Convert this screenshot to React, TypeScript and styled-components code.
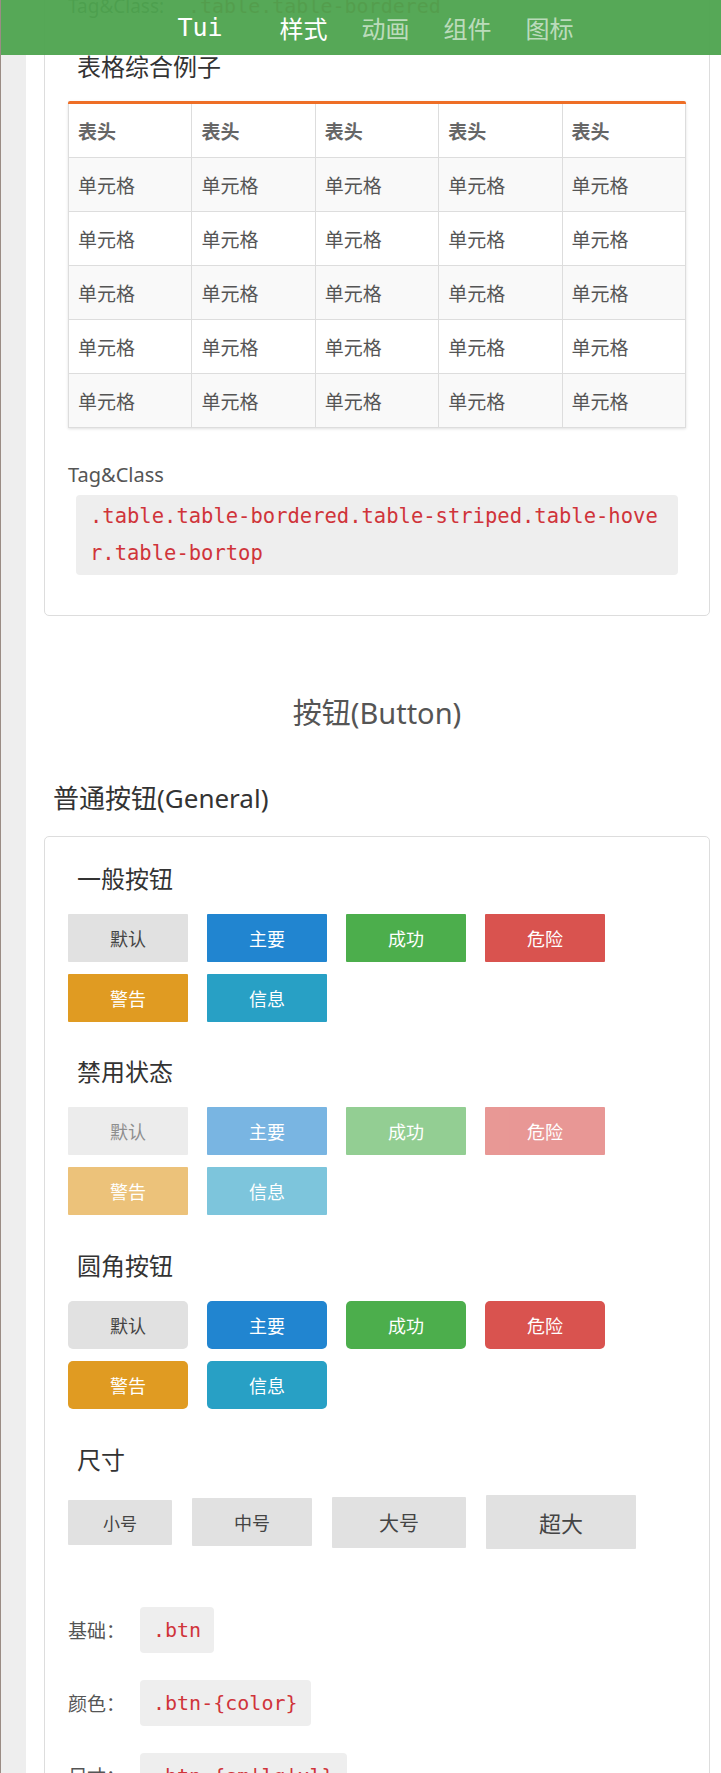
import styled, { createGlobalStyle, css } from 'styled-components';

const GlobalStyle = createGlobalStyle`
  html, body {
    margin: 0;
    padding: 0;
  }
  body {
    font-family: "Noto Sans", "Noto Sans CJK SC", sans-serif;
    color: #333;
    background: #fff;
  }
`;

const Page = styled.div`
  position: relative;
  display: flex;
  min-height: 100vh;
  border-left: 1px solid #9a8c84;
  overflow: hidden;
`;

const Rail = styled.aside`
  flex: 0 0 25px;
  background: #eee;
`;

const Main = styled.main`
  flex: 1;
  min-width: 0;
  padding: 0 11px 0 18px;
`;

const TopBar = styled.header`
  position: absolute;
  top: 0;
  left: 0;
  right: 0;
  height: 55px;
  padding-left: 29px;
  display: flex;
  align-items: center;
  justify-content: center;
  background: rgba(77, 163, 78, 0.95);
  z-index: 10;
`;

const Brand = styled.span`
  font-family: "DejaVu Sans Mono", monospace;
  font-size: 25px;
  color: #fff;
  margin-right: 57px;
`;

const Nav = styled.nav`
  display: flex;
  gap: 34px;
`;

const NavLink = styled.a<{ $active?: boolean }>`
  font-family: "Noto Sans CJK SC", sans-serif;
  font-size: 24px;
  line-height: 30px;
  color: ${(p) => (p.$active ? '#fff' : 'rgba(255, 255, 255, 0.62)')};
  text-decoration: none;
`;

const Card = styled.section<{ $shift?: number }>`
  margin-top: ${(p) => p.$shift ?? 0}px;
  border: 1px solid #ddd;
  border-radius: 5px;
  padding: 2px 23px 40px;
  background: #fff;
`;

const CardTitle = styled.h3<{ $gap?: number }>`
  margin: ${(p) => p.$gap ?? 33}px 0 0 9px;
  font-size: 24px;
  line-height: 34px;
  font-weight: 400;
  color: #333;
`;

const SectionTitle = styled.h2`
  margin: 77px 0 0;
  text-align: center;
  font-size: 29px;
  line-height: 40px;
  font-weight: 400;
  color: #555;
`;

const GroupTitle = styled.h2`
  margin: 48px 0 21px 9px;
  font-size: 26px;
  line-height: 34px;
  font-weight: 400;
  color: #333;
`;

const TableWrap = styled.div`
  margin-top: 17px;
  border-top: 3px solid #ee6e26;
  border-radius: 2px 2px 0 0;
  box-shadow: 0 1px 3px rgba(0, 0, 0, 0.12);
`;

const Table = styled.table`
  width: 100%;
  table-layout: fixed;
  border-collapse: collapse;
  font-family: "Noto Sans CJK SC", sans-serif;
  font-size: 19px;

  th,
  td {
    border: 1px solid #ddd;
    padding: 14px 9px;
    line-height: 25px;
    text-align: left;
  }
  thead th {
    border-top: 0;
    font-weight: 700;
    color: #666;
  }
  td {
    color: #555;
  }
  tbody tr:nth-child(odd) td {
    background: #f9f9f9;
  }
`;

const Caption = styled.div`
  margin-top: 32px;
  font-size: 20px;
  line-height: 30px;
  color: #555;
`;

const CodeBlock = styled.pre`
  margin: 5px 8px 0;
  padding: 3px 14px;
  background: #eee;
  border-radius: 4px;
  font-family: "DejaVu Sans Mono", monospace;
  font-size: 20.5px;
  line-height: 37px;
  color: #d0343a;
  white-space: pre-wrap;
  word-break: break-all;
`;

const ClassRow = styled.div<{ $gap?: number }>`
  display: flex;
  align-items: center;
  margin-top: ${(p) => p.$gap ?? 27}px;
`;

const ClassLabel = styled.span<{ $width: number }>`
  flex: 0 0 ${(p) => p.$width}px;
  font-size: 19px;
  color: #555;
`;

const Code = styled.code`
  display: inline-flex;
  align-items: center;
  height: 46px;
  padding: 0 13px;
  background: #eee;
  border-radius: 4px;
  font-family: "DejaVu Sans Mono", monospace;
  font-size: 20px;
  color: #d0343a;
`;

const ButtonRow = styled.div<{ $align?: boolean }>`
  display: flex;
  flex-wrap: wrap;
  align-items: ${(p) => (p.$align ? 'center' : 'flex-start')};
  column-gap: ${(p) => (p.$align ? 20 : 19)}px;
  row-gap: 12px;
  margin-top: 18px;
`;

type Tone = 'default' | 'primary' | 'success' | 'danger' | 'warning' | 'info';

const tones: Record<Tone, { bg: string; fg: string }> = {
  default: { bg: '#e1e1e1', fg: '#444' },
  primary: { bg: '#2185d0', fg: '#fff' },
  success: { bg: '#4cae4c', fg: '#fff' },
  danger: { bg: '#d9534f', fg: '#fff' },
  warning: { bg: '#e09b22', fg: '#fff' },
  info: { bg: '#28a0c5', fg: '#fff' },
};

const sizes = {
  sm: { w: 104, h: 45, f: 17 },
  md: { w: 120, h: 48, f: 18 },
  lg: { w: 134, h: 51, f: 20 },
  xl: { w: 150, h: 54, f: 22 },
  base: { w: 120, h: 48, f: 18 },
};

const Btn = styled.button<{
  $tone: Tone;
  $round?: boolean;
  $size?: keyof typeof sizes;
}>`
  display: inline-flex;
  align-items: center;
  justify-content: center;
  width: ${(p) => sizes[p.$size ?? 'base'].w}px;
  height: ${(p) => sizes[p.$size ?? 'base'].h}px;
  padding: 0;
  border: 0;
  border-radius: ${(p) => (p.$round ? 5 : 1)}px;
  font-family: "Noto Sans CJK SC", sans-serif;
  font-size: ${(p) => sizes[p.$size ?? 'base'].f}px;
  background: ${(p) => tones[p.$tone].bg};
  color: ${(p) => tones[p.$tone].fg};
  cursor: pointer;

  ${(p) =>
    p.disabled &&
    css`
      opacity: 0.6;
      cursor: not-allowed;
    `}
`;

const buttons: { tone: Tone; label: string }[] = [
  { tone: 'default', label: '默认' },
  { tone: 'primary', label: '主要' },
  { tone: 'success', label: '成功' },
  { tone: 'danger', label: '危险' },
  { tone: 'warning', label: '警告' },
  { tone: 'info', label: '信息' },
];

function ButtonSet({ round, disabled }: { round?: boolean; disabled?: boolean }) {
  return (
    <ButtonRow>
      {buttons.map((b) => (
        <Btn key={b.tone} $tone={b.tone} $round={round} disabled={disabled}>
          {b.label}
        </Btn>
      ))}
    </ButtonRow>
  );
}

export default function App() {
  const rows = [0, 1, 2, 3, 4];
  const cols = [0, 1, 2, 3, 4];
  return (
    <>
      <GlobalStyle />
      <Page>
        <TopBar>
          <Brand>Tui</Brand>
          <Nav>
            <NavLink $active>样式</NavLink>
            <NavLink>动画</NavLink>
            <NavLink>组件</NavLink>
            <NavLink>图标</NavLink>
          </Nav>
        </TopBar>
        <Rail />
        <Main>
          <Card $shift={-20}>
            <ClassRow $gap={0}>
              <ClassLabel $width={107}>Tag&amp;Class:</ClassLabel>
              <Code>.table.table-bordered</Code>
            </ClassRow>
            <CardTitle $gap={21}>表格综合例子</CardTitle>
            <TableWrap>
              <Table>
                <thead>
                  <tr>
                    {cols.map((c) => (
                      <th key={c}>表头</th>
                    ))}
                  </tr>
                </thead>
                <tbody>
                  {rows.map((r) => (
                    <tr key={r}>
                      {cols.map((c) => (
                        <td key={c}>单元格</td>
                      ))}
                    </tr>
                  ))}
                </tbody>
              </Table>
            </TableWrap>
            <Caption>Tag&amp;Class</Caption>
            <CodeBlock>.table.table-bordered.table-striped.table-hover.table-bortop</CodeBlock>
          </Card>

          <SectionTitle>按钮(Button)</SectionTitle>
          <GroupTitle>普通按钮(General)</GroupTitle>

          <Card>
            <CardTitle $gap={23}>一般按钮</CardTitle>
            <ButtonSet />
            <CardTitle>禁用状态</CardTitle>
            <ButtonSet disabled />
            <CardTitle $gap={34}>圆角按钮</CardTitle>
            <ButtonSet round />
            <CardTitle $gap={34}>尺寸</CardTitle>
            <ButtonRow $align>
              <Btn $tone="default" $size="sm">小号</Btn>
              <Btn $tone="default" $size="md">中号</Btn>
              <Btn $tone="default" $size="lg">大号</Btn>
              <Btn $tone="default" $size="xl">超大</Btn>
            </ButtonRow>
            <ClassRow $gap={58}>
              <ClassLabel $width={72}>基础：</ClassLabel>
              <Code>.btn</Code>
            </ClassRow>
            <ClassRow>
              <ClassLabel $width={72}>颜色：</ClassLabel>
              <Code>.btn-{'{color}'}</Code>
            </ClassRow>
            <ClassRow>
              <ClassLabel $width={72}>尺寸：</ClassLabel>
              <Code>.btn-{'{sm|lg|xl}'}</Code>
            </ClassRow>
          </Card>
        </Main>
      </Page>
    </>
  );
}
